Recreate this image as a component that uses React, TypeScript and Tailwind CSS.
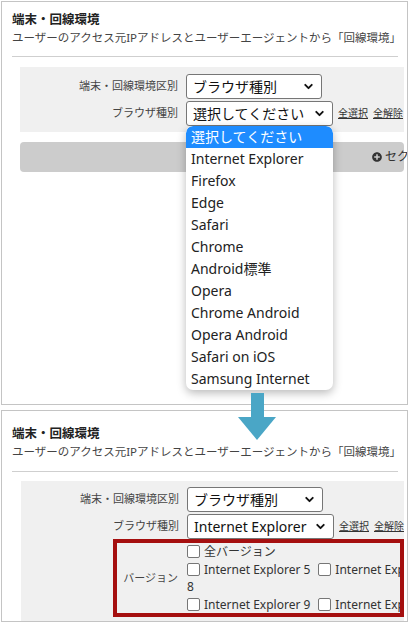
import { ChevronDown } from 'lucide-react';
import { FaPlusCircle } from 'react-icons/fa';

const font = { fontFamily: '"Noto Sans", "Noto Sans CJK JP", sans-serif' };

const browsers = [
  '選択してください',
  'Internet Explorer',
  'Firefox',
  'Edge',
  'Safari',
  'Chrome',
  'Android標準',
  'Opera',
  'Chrome Android',
  'Opera Android',
  'Safari on iOS',
  'Samsung Internet'
];

const FakeSelect = ({ value, width }: { value: string; width: string }) => (
  <div
    className={`${width} h-full ml-[8px] flex items-center justify-between pl-[6px] pr-[6px] bg-white border border-[#767676] rounded-[3px] text-[14px] text-[#111] whitespace-nowrap`}
  >
    <span className="leading-none">{value}</span>
    <ChevronDown size={13} strokeWidth={3.5} className="text-[#111] shrink-0" />
  </div>
);

const Label = ({ text }: { text: string }) => (
  <div className="w-[158px] shrink-0 text-right text-[11px] text-[#444]">{text}</div>
);

const Links = () => (
  <div className="ml-[5px] flex gap-[5px] text-[10px] text-[#333] underline whitespace-nowrap">
    <span>全選択</span>
    <span>全解除</span>
  </div>
);

const Header = () => (
  <>
    <p className="text-[12.5px] font-bold leading-[18px] text-[#222]">端末・回線環境</p>
    <p className="text-[11.5px] leading-[18px] text-[#444] whitespace-nowrap">
      ユーザーのアクセス元IPアドレスとユーザーエージェントから「回線環境」 「端末環境」を判定します。
    </p>
  </>
);

const Check = ({ label }: { label: string }) => (
  <span className="inline-flex items-center gap-[4px] whitespace-nowrap">
    <span className="w-[13px] h-[13px] bg-white border border-[#767676] rounded-[2px] shrink-0" />
    <span>{label}</span>
  </span>
);

const App = () => {
  return (
    <div className="w-[410px] h-[623px] relative overflow-hidden bg-white flex flex-col" style={font}>
      {/* before */}
      <div className="ml-[1px] mt-[1px] w-[407px] h-[404px] shrink-0 border border-[#c4c4c4] overflow-hidden relative pl-[10px] pt-[9px] pr-[3px]">
        <Header />
        <div className="mt-[9px] mr-[6px] h-px bg-[#cfcfcf]" />
        <div className="mt-[10px] ml-[8px] bg-[#f0f0f0] pt-[7px] pb-[6px]">
          <div className="flex items-center h-[25px]">
            <Label text="端末・回線環境区別" />
            <FakeSelect value="ブラウザ種別" width="w-[136px]" />
          </div>
          <div className="flex items-center h-[25px] mt-[2px]">
            <Label text="ブラウザ種別" />
            <FakeSelect value="選択してください" width="w-[147px]" />
            <Links />
          </div>
        </div>
        <div className="mt-[10px] ml-[8px] h-[30px] rounded-[4px] bg-[#cccccc] flex items-center pl-[352px] gap-[3px] text-[12px] text-[#333] whitespace-nowrap">
          <FaPlusCircle size={10} className="text-[#333] shrink-0" />
          <span>セクションを追加</span>
        </div>

        <div className="absolute left-[184px] top-[124px] w-[147px] bg-white rounded-[7px] shadow-[0_3px_10px_rgba(0,0,0,0.28)] overflow-hidden">
          {browsers.map((b, i) => (
            <div
              key={b}
              className={`h-[22px] leading-[22px] pl-[5px] text-[14px] whitespace-nowrap ${
                i === 0 ? 'bg-[#1e8cff] text-white rounded-t-[7px]' : 'text-[#222]'
              }`}
            >
              {b}
            </div>
          ))}
        </div>
      </div>

      {/* after */}
      <div className="ml-[1px] mt-[5px] w-[407px] h-[212px] shrink-0 border border-[#c4c4c4] overflow-hidden pl-[10px] pt-[14px] pr-[3px]">
        <Header />
        <div className="mt-[10px] mr-[6px] h-px bg-[#cfcfcf]" />
        <div className="mt-[9px] ml-[9px] bg-[#f0f0f0] pt-[6px] h-[200px]">
          <div className="flex items-center h-[25px]">
            <Label text="端末・回線環境区別" />
            <FakeSelect value="ブラウザ種別" width="w-[136px]" />
          </div>
          <div className="flex items-center h-[25px] mt-[2px]">
            <Label text="ブラウザ種別" />
            <FakeSelect value="Internet Explorer" width="w-[147px]" />
            <Links />
          </div>
          <div className="flex">
            <div className="w-[92px] shrink-0" />
            <div className="flex-1 min-w-0 h-[78px] border-4 border-[#a50f0f] flex items-center overflow-hidden">
              <div className="w-[61px] shrink-0 text-right text-[11px] text-[#444]">バージョン</div>
              <div className="ml-[9px] text-[12px] leading-[17.5px] text-[#333] whitespace-nowrap">
                <div className="flex">
                  <Check label="全バージョン" />
                </div>
                <div className="flex gap-[8px]">
                  <Check label="Internet Explorer 5" />
                  <Check label="Internet Explorer 6" />
                </div>
                <div>8</div>
                <div className="flex gap-[8px]">
                  <Check label="Internet Explorer 9" />
                  <Check label="Internet Explorer 10" />
                </div>
              </div>
            </div>
          </div>
        </div>
      </div>

      {/* arrow */}
      <svg className="absolute left-[238px] top-[393px]" width="38" height="47" viewBox="0 0 38 47">
        <rect x="13" y="0" width="13" height="25" fill="#4aa6c6" />
        <polygon points="0,24 38,24 19,47" fill="#4aa6c6" />
      </svg>
    </div>
  );
};

export default App;
